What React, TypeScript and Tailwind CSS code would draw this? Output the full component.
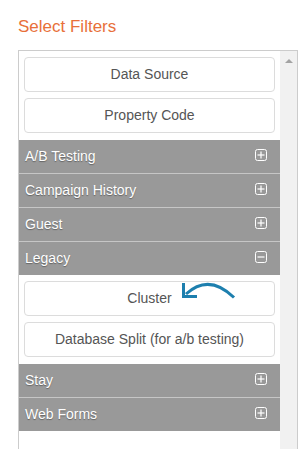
import React from "react";

type Section = {
  title: string;
  open?: boolean;
  items?: string[];
};

const sections: Section[] = [
  { title: "A/B Testing" },
  { title: "Campaign History" },
  { title: "Guest" },
  { title: "Legacy", open: true, items: ["Cluster", "Database Split (for a/b testing)"] },
  { title: "Stay" },
  { title: "Web Forms" },
];

function ToggleIcon({ open }: { open?: boolean }) {
  return (
    <svg width="12" height="12" viewBox="0 0 12 12" className="mt-[9px] shrink-0">
      <rect x="0.5" y="0.5" width="11" height="11" rx="2" fill="none" stroke="#ffffff" strokeWidth="1" />
      <line x1="2.5" y1="6" x2="9.5" y2="6" stroke="#ffffff" strokeWidth="1.2" />
      {!open && <line x1="6" y1="2.5" x2="6" y2="9.5" stroke="#ffffff" strokeWidth="1.2" />}
    </svg>
  );
}

function FilterButton({ label, children }: { label: string; children?: React.ReactNode }) {
  return (
    <div className="relative flex h-[35px] items-center justify-center rounded-[4px] border border-[#dcdcdc] bg-white text-[14px] text-[#555555]">
      {label}
      {children}
    </div>
  );
}

function CurvedArrow() {
  return (
    <svg
      width="60"
      height="24"
      viewBox="0 0 60 24"
      className="absolute left-[155px] top-[-4px]"
    >
      <path d="M54 19.5 Q29 -5 6 16" fill="none" stroke="#1d7fae" strokeWidth="3" />
      <path d="M3.5 5 L3.5 18.5 L17 18.5" fill="none" stroke="#1d7fae" strokeWidth="3" />
    </svg>
  );
}

export default function App() {
  return (
    <div className="h-[449px] w-[304px] overflow-hidden bg-white font-[Liberation_Sans,Arial,sans-serif]">
      <h2 className="pl-[18px] pt-[17px] text-[17px] leading-[19px] text-[#e8703a]">
        Select Filters
      </h2>

      <div className="ml-[18px] mt-[14px] flex h-[420px] w-[280px] border border-[#cccccc]">
        <div className="flex-1">
          <div className="flex flex-col gap-[6px] px-[5px] pb-[7px] pt-[6px]">
            <FilterButton label="Data Source" />
            <FilterButton label="Property Code" />
          </div>

          {sections.map((s, i) => (
            <div key={s.title}>
              <div
                className={
                  "box-content flex h-[33px] justify-between bg-[#999999] pl-[6px] pr-[13px] text-[14px] text-white [text-shadow:0_1px_1px_rgba(0,0,0,0.35)] " +
                  (i > 0 && !sections[i - 1].open ? "border-t border-[#c6c6c6]" : "")
                }
              >
                <span className="self-center">{s.title}</span>
                <ToggleIcon open={s.open} />
              </div>
              {s.open && s.items && (
                <div className="flex flex-col gap-[6px] px-[5px] pb-[7px] pt-[6px]">
                  {s.items.map((item, j) => (
                    <FilterButton key={item} label={item}>
                      {j === 0 && <CurvedArrow />}
                    </FilterButton>
                  ))}
                </div>
              )}
            </div>
          ))}
        </div>

        <div className="w-[17px] bg-[#f1f1f1]">
          <div className="mx-auto mt-[8px] h-0 w-0 border-x-[4px] border-b-[4px] border-x-transparent border-b-[#a3a3a3]" />
        </div>
      </div>
    </div>
  );
}
